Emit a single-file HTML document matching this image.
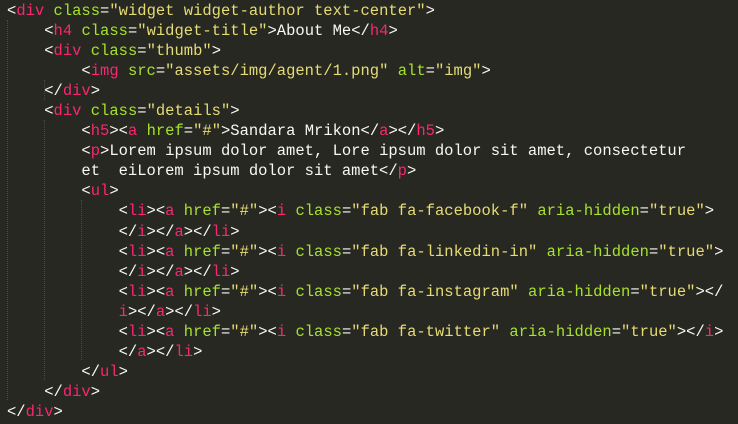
<!DOCTYPE html>
<html style="height:424px;overflow:hidden"><head><style>
body{margin:0;background:#272822;width:738px;height:424px;overflow:hidden;position:relative}
pre{margin:0;position:absolute;left:7px;top:1px;font-family:"Liberation Mono",monospace;font-size:15.5px;line-height:20.05px;color:#f8f8f2;letter-spacing:0}
.t{color:#f92672}.a{color:#a6e22e}.s{color:#e6db74}
.g{position:absolute;width:0;border-left:1px dotted #4a4a44}
</style></head><body>
<div class="g" style="left:7px;top:20px;height:380px"></div>
<div class="g" style="left:44px;top:80px;height:20px"></div>
<div class="g" style="left:44px;top:120px;height:260px"></div>
<div class="g" style="left:81px;top:200px;height:160px"></div>
<pre>&lt;<span class="t">div</span> <span class="a">class</span>=<span class="s">"widget widget-author text-center"</span>&gt;
    &lt;<span class="t">h4</span> <span class="a">class</span>=<span class="s">"widget-title"</span>&gt;About Me&lt;/<span class="t">h4</span>&gt;
    &lt;<span class="t">div</span> <span class="a">class</span>=<span class="s">"thumb"</span>&gt;
        &lt;<span class="t">img</span> <span class="a">src</span>=<span class="s">"assets/img/agent/1.png"</span> <span class="a">alt</span>=<span class="s">"img"</span>&gt;
    &lt;/<span class="t">div</span>&gt;
    &lt;<span class="t">div</span> <span class="a">class</span>=<span class="s">"details"</span>&gt;
        &lt;<span class="t">h5</span>&gt;&lt;<span class="t">a</span> <span class="a">href</span>=<span class="s">"#"</span>&gt;Sandara Mrikon&lt;/<span class="t">a</span>&gt;&lt;/<span class="t">h5</span>&gt;
        &lt;<span class="t">p</span>&gt;Lorem ipsum dolor amet, Lore ipsum dolor sit amet, consectetur
        et  eiLorem ipsum dolor sit amet&lt;/<span class="t">p</span>&gt;
        &lt;<span class="t">ul</span>&gt;
            &lt;<span class="t">li</span>&gt;&lt;<span class="t">a</span> <span class="a">href</span>=<span class="s">"#"</span>&gt;&lt;<span class="t">i</span> <span class="a">class</span>=<span class="s">"fab fa-facebook-f"</span> <span class="a">aria-hidden</span>=<span class="s">"true"</span>&gt;
            &lt;/<span class="t">i</span>&gt;&lt;/<span class="t">a</span>&gt;&lt;/<span class="t">li</span>&gt;
            &lt;<span class="t">li</span>&gt;&lt;<span class="t">a</span> <span class="a">href</span>=<span class="s">"#"</span>&gt;&lt;<span class="t">i</span> <span class="a">class</span>=<span class="s">"fab fa-linkedin-in"</span> <span class="a">aria-hidden</span>=<span class="s">"true"</span>&gt;
            &lt;/<span class="t">i</span>&gt;&lt;/<span class="t">a</span>&gt;&lt;/<span class="t">li</span>&gt;
            &lt;<span class="t">li</span>&gt;&lt;<span class="t">a</span> <span class="a">href</span>=<span class="s">"#"</span>&gt;&lt;<span class="t">i</span> <span class="a">class</span>=<span class="s">"fab fa-instagram"</span> <span class="a">aria-hidden</span>=<span class="s">"true"</span>&gt;&lt;/
            <span class="t">i</span>&gt;&lt;/<span class="t">a</span>&gt;&lt;/<span class="t">li</span>&gt;
            &lt;<span class="t">li</span>&gt;&lt;<span class="t">a</span> <span class="a">href</span>=<span class="s">"#"</span>&gt;&lt;<span class="t">i</span> <span class="a">class</span>=<span class="s">"fab fa-twitter"</span> <span class="a">aria-hidden</span>=<span class="s">"true"</span>&gt;&lt;/<span class="t">i</span>&gt;
            &lt;/<span class="t">a</span>&gt;&lt;/<span class="t">li</span>&gt;
        &lt;/<span class="t">ul</span>&gt;
    &lt;/<span class="t">div</span>&gt;
&lt;/<span class="t">div</span>&gt;
&lt;<span class="t">div</span> <span class="a">class</span>=<span class="s">"widget widget-list"</span>&gt;</pre>
</body></html>
